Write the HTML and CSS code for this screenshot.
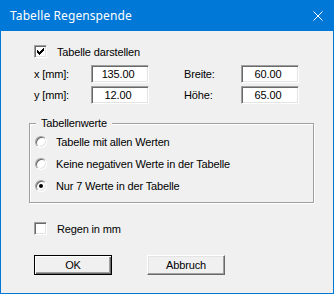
FILE: index.html
```html
<!DOCTYPE html>
<html lang="de">
<head>
    <meta charset="UTF-8">
    <title>Tabelle Regenspende</title>
    <link rel="stylesheet" href="styles.css">
</head>
<body>
    <div class="dialog">
        <div class="titlebar">
            <span class="title">Tabelle Regenspende</span>
            <svg class="close" width="10" height="10" viewBox="0 0 10 10">
                <path d="M0.5 0.5L9.5 9.5M9.5 0.5L0.5 9.5" stroke="#fff" stroke-width="1" fill="none"/>
            </svg>
        </div>
        <div class="content">
            <div class="check-row">
                <span class="checkbox">
                    <svg width="11" height="11" viewBox="0 0 11 11" shape-rendering="crispEdges">
                        <path d="M8 2h1v1h-1z M7 3h2v1h-2z M2 4h1v1h-1z M6 4h3v1h-3z M2 5h2v1h-2z M5 5h3v1h-3z M2 6h5v1h-5z M3 7h3v1h-3z M4 8h1v1h-1z" fill="#000"/>
                    </svg>
                </span>
                <span>Tabelle darstellen</span>
            </div>

            <div class="fields">
                <span class="field-label">x [mm]:</span>
                <span class="edit">135.00</span>
                <span class="field-label">Breite:</span>
                <span class="edit">60.00</span>
                <span class="field-label">y [mm]:</span>
                <span class="edit">12.00</span>
                <span class="field-label">Höhe:</span>
                <span class="edit">65.00</span>
            </div>

            <div class="group">
                <span class="group-label">Tabellenwerte</span>
                <div class="radio-list">
                    <div class="radio-row"><span class="radio"></span>Tabelle mit allen Werten</div>
                    <div class="radio-row"><span class="radio"></span>Keine negativen Werte in der Tabelle</div>
                    <div class="radio-row"><span class="radio selected"></span>Nur 7 Werte in der Tabelle</div>
                </div>
            </div>

            <div class="check-row regen">
                <span class="checkbox"></span>
                <span>Regen in mm</span>
            </div>

            <div class="buttons">
                <button class="btn default">OK</button>
                <button class="btn">Abbruch</button>
            </div>
        </div>
    </div>
</body>
</html>
```

FILE: styles.css
```css
body {
    margin: 0;
    font-family: 'Liberation Sans', Arial, sans-serif;
    font-size: 11px;
    letter-spacing: -0.15px;
    color: #000;
}
.dialog {
    width: 334px;
    height: 294px;
    box-sizing: border-box;
    border: 1px solid #0078D7;
    border-top: none;
    background: #F0F0F0;
}
.titlebar {
    height: 31px;
    background: #0078D7;
    display: flex;
    align-items: center;
    justify-content: space-between;
    padding: 0 10px 0 9px;
    color: white;
}
.title {
    font-family: 'Noto Sans', 'Open Sans', sans-serif;
    font-size: 12px;
    letter-spacing: 0.1px;
}
.content {
    padding-left: 28px;
}
.check-row {
    display: flex;
    align-items: center;
    gap: 10px;
    height: 13px;
    margin: 14px 0 0 5px;
}
.checkbox {
    width: 13px;
    height: 13px;
    box-sizing: border-box;
    border: 1px solid;
    border-color: #A0A0A0 #fff #fff #A0A0A0;
    box-shadow: inset 1px 1px 0 #696969, inset -1px -1px 0 #E3E3E3;
    background: white;
}
.checkbox svg {
    display: block;
}
.fields {
    display: grid;
    grid-template-columns: 57px 58px 35px 57px 58px;
    grid-template-rows: 18px 18px;
    row-gap: 3px;
    align-items: center;
    margin: 7px 0 0 5px;
}
.fields .edit:nth-child(2), .fields .edit:nth-child(6) {
    grid-column: 2;
}
.fields .field-label:nth-child(3), .fields .field-label:nth-child(7) {
    grid-column: 4;
}
.fields .edit:nth-child(4), .fields .edit:nth-child(8) {
    grid-column: 5;
}
.edit {
    height: 18px;
    box-sizing: border-box;
    border: 1px solid;
    border-color: #A0A0A0 #fff #fff #A0A0A0;
    box-shadow: inset 1px 1px 0 #696969, inset -1px -1px 0 #E3E3E3;
    background: white;
    text-align: center;
    padding-right: 4px;
    line-height: 16px;
}
.group {
    width: 285px;
    height: 80px;
    box-sizing: border-box;
    margin-top: 19px;
    border: 1px solid #A0A0A0;
    box-shadow: inset 1px 1px 0 #fff, 1px 1px 0 #fff;
}
.group-label {
    display: block;
    width: fit-content;
    height: 13px;
    line-height: 13px;
    margin: -7px 0 0 6px;
    padding: 0 5px;
    background: #F0F0F0;
}
.radio-list {
    padding: 1px 0 0 5px;
}
.radio-row {
    display: flex;
    align-items: center;
    gap: 9px;
    height: 22px;
}
.radio {
    width: 12px;
    height: 12px;
    box-sizing: border-box;
    border-radius: 50%;
    border: 1px solid;
    border-color: #A0A0A0 #fff #fff #A0A0A0;
    box-shadow: inset 1px 1px 0 #696969, inset -1px -1px 0 #E3E3E3;
    background: white;
    display: flex;
    align-items: center;
    justify-content: center;
}
.radio.selected::after {
    content: '';
    width: 4px;
    height: 4px;
    border-radius: 50%;
    background: #000;
}
.regen {
    margin-top: 19px;
}
.buttons {
    display: flex;
    gap: 35px;
    margin: 20px 0 0 5px;
}
.btn {
    width: 78px;
    height: 20px;
    box-sizing: border-box;
    padding: 0;
    font: inherit;
    letter-spacing: inherit;
    background: #F0F0F0;
    border: 1px solid;
    border-color: #fff #696969 #696969 #fff;
    box-shadow: inset -1px -1px 0 #A0A0A0, inset 1px 1px 0 #E3E3E3;
}
.btn.default {
    border-color: #000;
    box-shadow: inset 1px 1px 0 #fff, inset -1px -1px 0 #696969, inset -2px -2px 0 #A0A0A0;
}
```
